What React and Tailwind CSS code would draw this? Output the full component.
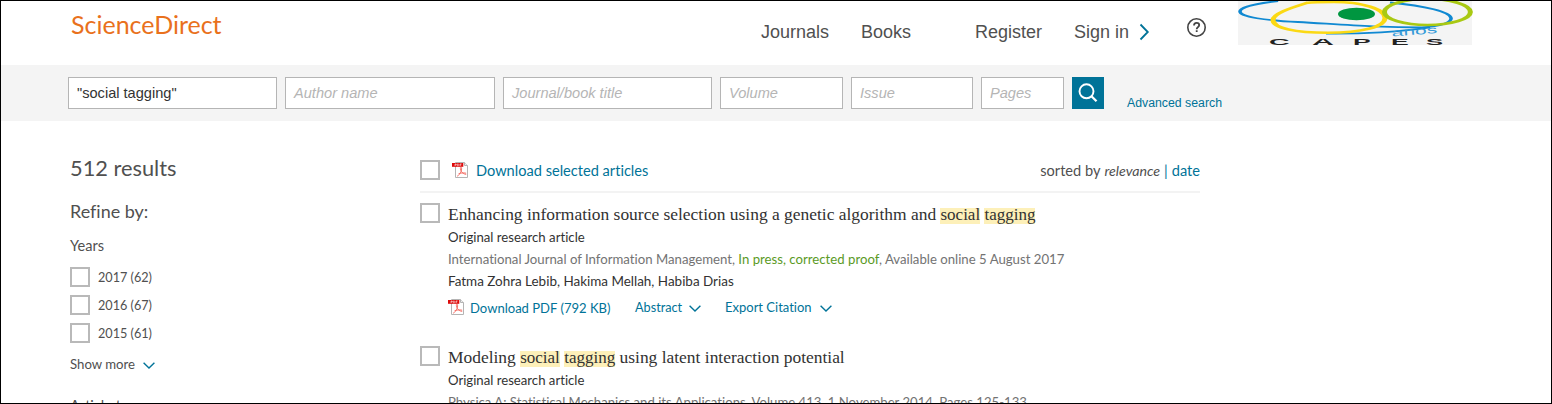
const fields = [
  { label: "Author name", width: "w-[210px]" },
  { label: "Journal/book title", width: "w-[209px]" },
  { label: "Volume", width: "w-[123px]" },
  { label: "Issue", width: "w-[122px]" },
  { label: "Pages", width: "w-[83px]" },
];

const years = ["2017 (62)", "2016 (67)", "2015 (61)"];

function Checkbox() {
  return <span className="block size-5 shrink-0 border-2 border-[#b9b9b9] bg-white" />;
}

function ChevronDown() {
  return (
    <svg className="h-[7px] w-3 shrink-0" viewBox="0 0 12 7" fill="none" stroke="#007398" strokeWidth="1.4">
      <path d="M.6.8 6 6 11.4.8" />
    </svg>
  );
}

function PdfIcon() {
  return (
    <svg className="size-4 shrink-0" viewBox="0 0 16 16">
      <path d="M3.5.5h9l3 3v12h-12z" fill="#fff" stroke="#b4b4b4" />
      <path d="M12.5.5v3h3" fill="#eee" stroke="#b4b4b4" />
      <path d="M8.8 5.2c-1 .2-.2 2.600.4 4C8.300 11.500 6.500 13.800 5.200 14.200M9.200 5.200c.8.8.3 2.500 0 4 .9 1.700 2.800 3 5 3.200M6.500 11.800c2-.9 4.800-1.200 7.700-.6" fill="none" stroke="#f4665c" strokeWidth=".9" />
      <path d="M0 1h11.300v3.800H0z" fill="#dd0b0b" />
      <path d="M3 4V2h1.200v1H3M5.300 2v1.800h.9l.5-.4v-1L6.200 2zM8 4V2h1.600M8 3h1.200" fill="none" stroke="#fff" strokeWidth=".55" />
    </svg>
  );
}

function Mark({ children }) {
  return <span className="inline-block bg-[#fdf0b9] pb-[2px] text-[17px] leading-[14px]">{children}</span>;
}

function CapesLogo() {
  return (
    <svg className="absolute left-[1237px] -top-px h-[45px] w-[234px] overflow-visible" viewBox="0 0 234 45">
      <rect width="234" height="45" fill="#f4f4f4" />
      <g fill="none" transform="scale(2 1)">
        <path d="M20 1C7 4 1 8 1 11.500 1 17 14 20.500 30 22c22 2.500 40 5.500 62 5.500 9-1 15-5 14.500-9.500C106 12 94 6 76 2.500" stroke="#1089d2" strokeWidth="1.800" />
        <path d="M44 33.600c18 .4 38-1.800 52-6.200" stroke="#1089d2" strokeWidth="1.700" />
        <path d="M35 2.500C28 7 17.500 13 17.500 20c0 8 11 12.800 27.500 12.800 17 0 28.500-6 28.500-14.800C73.500 9 62 2 48 2 42 2 38 2 34 3" stroke="#fbd914" strokeWidth="2.500" />
        <ellipse cx="94.700" cy="12" rx="21.500" ry="13" stroke="#a9c913" strokeWidth="2.500" />
      </g>
      <ellipse cx="118.500" cy="14" rx="18.500" ry="6.200" fill="#009640" />
      <text transform="translate(154 36.500) rotate(-4.500) scale(2 1)" fontFamily="Liberation Sans" fontSize="10.500" fill="#369bd8">anos</text>
      <g fill="#222" fontFamily="Liberation Sans" fontSize="9.500" fontWeight="bold">
        <text transform="translate(31 44.800) scale(3 1)">C</text>
        <text transform="translate(74 44.800) scale(3.200 1)">A</text>
        <text transform="translate(115 44.800) scale(2.800 1)">P</text>
        <text transform="translate(153 44.800) scale(2.800 1)">E</text>
        <text transform="translate(188 44.800) scale(2.700 1)">S</text>
      </g>
      <rect width="234" height="1" fill="#000" />
      <path d="M31 .5h16M108 .5h34" stroke="#ff7526" />
      <path d="M68 .5h17M160 .5h52" stroke="#332be0" />
    </svg>
  );
}

function Header() {
  return (
    <header className="flex h-16 items-start pl-[70px] text-[18px] leading-6 text-[#505050]">
      <h1 className="w-[690px] pt-[6px] font-['Lato'] text-[25px] leading-[34px] text-[#e9711c]">ScienceDirect</h1>
      <nav className="flex pt-[19px]">
        <span className="w-[100px]">Journals</span>
        <span className="w-[114px]">Books</span>
        <span className="w-[99px]">Register</span>
        <span className="w-[65px]">Sign in</span>
        <svg className="mt-[3px] h-[18px] w-[11px]" viewBox="0 0 11 18" fill="none" stroke="#007398" strokeWidth="1.800">
          <path d="m1.500 1.500 7.300 7.500-7.300 7.500" />
        </svg>
      </nav>
      <svg className="ml-[37px] mt-[16px] size-5" viewBox="0 0 20 20" fill="none" stroke="#444">
        <circle cx="9.500" cy="10.500" r="8.700" strokeWidth="1.600" />
        <path d="M7 8.500c0-1.700 1-2.700 2.600-2.700s2.600.9 2.600 2.300c0 2-2.500 2-2.500 4.100M9.700 13.300v1.700" strokeWidth="1.800" />
      </svg>
      <CapesLogo />
    </header>
  );
}

function SearchBar() {
  return (
    <div className="flex h-14 gap-2 bg-[#f4f4f4] pl-[67px] pt-3 text-[14.600px]">
      <div className="flex h-8 w-[209px] items-center border border-[#b5b5b5] bg-white pl-2 pt-px text-[#333]">"social tagging"</div>
      {fields.map((f) => (
        <div key={f.label} className={`${f.width} flex h-8 shrink-0 items-center border border-[#b5b5b5] bg-white pl-2 pt-px italic text-[#b5b5b5]`}>
          {f.label}
        </div>
      ))}
      <div className="size-8 bg-[#007398]">
        <svg className="size-8" viewBox="0 0 32 32" fill="none" stroke="#fff" strokeWidth="1.900">
          <circle cx="14.500" cy="14.300" r="7" />
          <path d="m19.500 19.300 5 5" strokeWidth="2.300" />
        </svg>
      </div>
      <a className="ml-[15px] mt-[17px] text-[12.300px] leading-[18px] text-[#007398]">Advanced search</a>
    </div>
  );
}

function Sidebar() {
  return (
    <aside className="w-[350px] text-[#505050]">
      <h2 className="mt-[31px] h-8 text-[21.800px] leading-8">512 results</h2>
      <h3 className="mt-[15px] h-6 text-[17.960px] leading-6">Refine by:</h3>
      <h4 className="mt-[13px] h-5 text-[14.570px] leading-5">Years</h4>
      <div className="mt-[11px] flex flex-col gap-2 text-[12.650px] leading-[22px]">
        {years.map((y) => (
          <div key={y} className="flex h-5 gap-2">
            <Checkbox />
            <span>{y}</span>
          </div>
        ))}
      </div>
      <div className="mt-[11px] flex h-5 items-center gap-2 text-[13.200px] leading-5">
        Show more
        <span className="pt-[3px]"><ChevronDown /></span>
      </div>
      <h4 className="mt-[22px] h-5 text-[14.570px] leading-5">Article type</h4>
    </aside>
  );
}

function Title({ children }) {
  return <h3 className="h-6 whitespace-nowrap font-['Liberation_Serif',serif] text-[17.450px] leading-[22px] text-[#323232]">{children}</h3>;
}

function Results() {
  return (
    <main className="w-[780px] pt-[39px]">
      <div className="flex h-[33px] border-b-2 border-[#f3f3f3] text-[14.600px] leading-[22px]">
        <Checkbox />
        <span className="ml-3 mt-[2px]"><PdfIcon /></span>
        <a className="ml-2 text-[#007398]">Download selected articles</a>
        <div className="ml-auto flex gap-1 text-[#505050]">
          <span>sorted by</span>
          <i className="text-[14.200px]">relevance</i>
          <span className="text-[#007398]">|</span>
          <a className="text-[#007398]">date</a>
        </div>
      </div>
      <article className="flex h-[143px] gap-2 pt-[10px]">
        <Checkbox />
        <div className="text-[13.200px] leading-[22px] text-[#323232]">
          <Title>Enhancing information source selection using a genetic algorithm and <Mark>social</Mark> <Mark>tagging</Mark></Title>
          <p className="-mt-px">Original research article</p>
          <p className="whitespace-nowrap text-[#737373]">International Journal of Information Management, <span className="text-[#5b9a1f]">In press, corrected proof</span>, Available online 5 August 2017</p>
          <p className="text-[13.460px]">Fatma Zohra Lebib, Hakima Mellah, Habiba Drias</p>
          <div className="mt-[5px] flex items-start text-[13.050px] text-[#007398]">
            <span className="mt-[2px]"><PdfIcon /></span>
            <span className="ml-[6px] w-[165px]">Download PDF (792 KB)</span>
            <span className="-mt-px w-[54px] text-[12.700px]">Abstract</span>
            <span className="mt-[8px] w-9"><ChevronDown /></span>
            <span className="-mt-px w-[95px] text-[13px]">Export Citation</span>
            <span className="mt-[8px]"><ChevronDown /></span>
          </div>
        </div>
      </article>
      <article className="flex gap-2 pt-[10px]">
        <Checkbox />
        <div className="text-[13.170px] leading-[22px] text-[#323232]">
          <Title>Modeling <Mark>social</Mark> <Mark>tagging</Mark> using latent interaction potential</Title>
          <p className="-mt-px">Original research article</p>
          <p className="whitespace-nowrap text-[#737373]">Physica A: Statistical Mechanics and its Applications, Volume 413, 1 November 2014, Pages 125-133</p>
        </div>
      </article>
    </main>
  );
}

export default function App() {
  return (
    <div className="relative h-[404px] w-[1552px] overflow-hidden border border-black bg-white font-['Liberation_Sans',sans-serif]">
      <Header />
      <SearchBar />
      <div className="flex pl-[69px] font-['Lato',sans-serif] [font-variant-ligatures:none]">
        <Sidebar />
        <Results />
      </div>
    </div>
  );
}
